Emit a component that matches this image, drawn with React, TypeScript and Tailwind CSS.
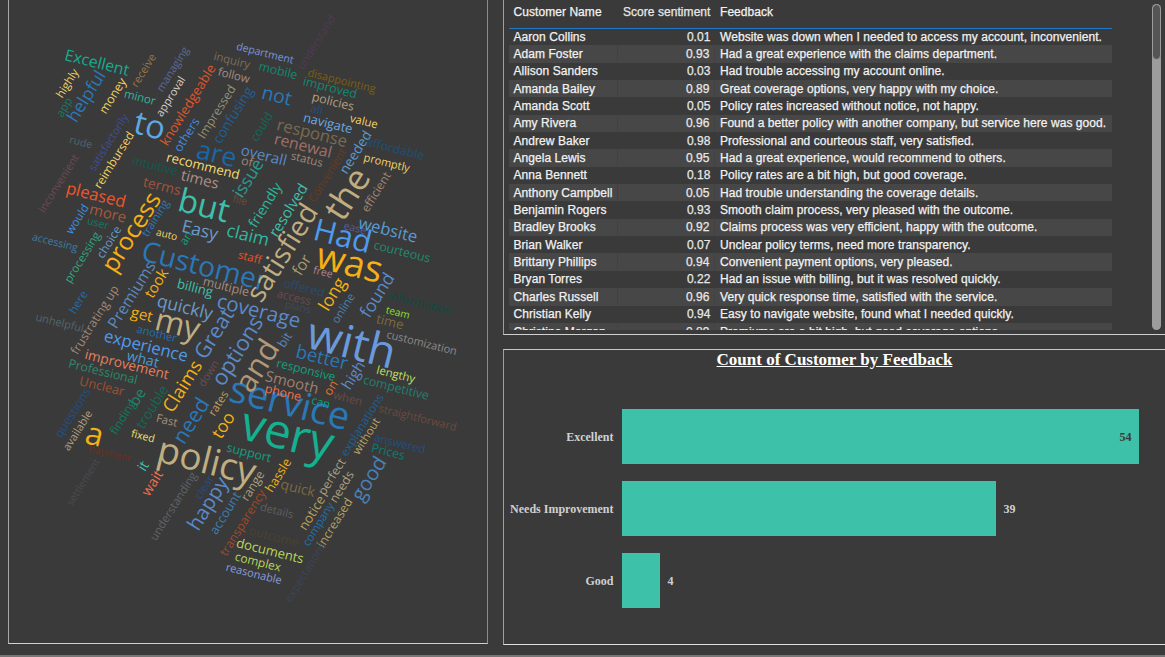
const A = 14;
const B = -58;

// word, center x, center y, font size, rotation, colour (page coordinates)
const words: [string, number, number, number, number, string][] = [
  ["Excellent", 97, 63, 18, A, "#14ae8e"],
  ["highly", 67, 83, 13, B, "#f2d466"],
  ["app", 64, 107, 13, B, "#0f7a60"],
  ["helpful", 86, 96, 20, B, "#2a78b8"],
  ["money", 113, 96, 14, B, "#f2d466"],
  ["receive", 143, 70, 12.5, B, "#9a7548"],
  ["minor", 140, 97, 13, A, "#2fb89e"],
  ["managing", 172, 69, 12.5, B, "#5b6a9a"],
  ["approval", 170, 96, 12.5, B, "#d5d0c5"],
  ["knowledgeable", 188, 105, 15, B, "#e0562b"],
  ["others", 187, 135, 14, B, "#3f8fdf"],
  ["Impressed", 217, 112, 14, B, "#9a8e70"],
  ["confusing", 233, 115, 16, B, "#1f5f96"],
  ["inquiry", 232, 60, 13, A, "#7a6e55"],
  ["follow", 234, 75, 13, A, "#a58e80"],
  ["department", 265, 53, 12, A, "#7a96de"],
  ["to", 150, 125, 37, A, "#5fa8e0"],
  ["rude", 81, 142, 12, A, "#4f6670"],
  ["satisfactorily", 108, 142, 12.5, B, "#3f4f95"],
  ["reimbursed", 114, 160, 13.5, B, "#f2d466"],
  ["inconvenient", 58, 183, 12.5, B, "#6e4a52"],
  ["intuitive", 155, 166, 14, A, "#0f5a4e"],
  ["recommend", 203, 166, 15, A, "#f5dc70"],
  ["are", 217, 153, 30, A, "#1a67a8"],
  ["times", 200, 179, 17, A, "#b09088"],
  ["terms", 162, 186, 16, A, "#a0543a"],
  ["pleased", 96, 195, 19, A, "#f0562a"],
  ["but", 204, 205, 37, A, "#3fc0aa"],
  ["more", 108, 213, 17, A, "#a85a38"],
  ["file", 240, 200, 12, A, "#6a4a3e"],
  ["process", 131, 232, 28, B, "#f5b014"],
  ["training", 155, 218, 13, B, "#2a78b8"],
  ["would", 77, 219, 13, B, "#3f8fdf"],
  ["user", 98, 223, 12, A, "#0f7a60"],
  ["accessing", 55, 242, 12, A, "#3f7aa0"],
  ["processing", 82, 257, 13, B, "#2fa880"],
  ["choice", 109, 242, 13.5, B, "#6a9ac8"],
  ["Customer", 205, 265, 32, A, "#2a78b8"],
  ["Easy", 200, 230, 20, A, "#6a9ac8"],
  ["claim", 248, 235, 20, A, "#2fb89e"],
  ["auto", 167, 234, 11.5, A, "#f2d466"],
  ["an", 186, 238, 13.5, B, "#10a080"],
  ["staff", 250, 257, 13, A, "#e0562b"],
  ["Premiums", 132, 295, 18, B, "#5a8ac0"],
  ["took", 156, 283, 17, B, "#f5b014"],
  ["billing", 195, 288, 15, A, "#3fc0aa"],
  ["multiple", 226, 287, 14, A, "#a08e80"],
  ["quickly", 185, 307, 20, A, "#6a9ac8"],
  ["coverage", 259, 310, 23, A, "#5a8ac8"],
  ["here", 78, 302, 13, B, "#1f6fb0"],
  ["frustrating up", 95, 320, 14, B, "#a08878"],
  ["get", 142, 314, 17, A, "#f5b014"],
  ["my", 178, 323, 36, A, "#c0ae80"],
  ["unhelpful", 60, 322, 12.5, A, "#4f6670"],
  ["another", 157, 333, 12.5, A, "#1f6fb0"],
  ["Great", 213, 333, 24, B, "#5a8ac8"],
  ["options", 236, 350, 25, B, "#5a8ac8"],
  ["experience", 146, 346, 19, A, "#4f9aef"],
  ["what", 143, 359, 16, A, "#4f9acf"],
  ["improvement", 127, 364, 15.5, A, "#e8805c"],
  ["Professional", 103, 372, 14, A, "#2a8a6a"],
  ["Unclear", 102, 386, 14.5, A, "#a05030"],
  ["down", 208, 373, 12.5, B, "#6e4a52"],
  ["Claims", 182, 386, 21, B, "#f5b014"],
  ["rates", 218, 403, 13, B, "#c0a060"],
  ["be", 137, 397, 17, B, "#1f8a70"],
  ["finding", 123, 417, 13.5, B, "#0f7a60"],
  ["trouble", 152, 407, 16, B, "#0f6a55"],
  ["questions", 73, 413, 14, B, "#1f4f85"],
  ["available", 77, 430, 12.5, B, "#b0a080"],
  ["a", 95, 433, 36, A, "#f5b014"],
  ["Fast", 167, 420, 13, A, "#a89078"],
  ["fixed", 143, 436, 12, A, "#f2e070"],
  ["need", 190, 420, 24, B, "#2a78b8"],
  ["too", 223, 425, 20, B, "#f5b014"],
  ["service", 290, 402, 43, A, "#2a78b8"],
  ["very", 288, 432, 54, A, "#14b090"],
  ["and", 256, 365, 35, B, "#b09878"],
  ["policy", 207, 460, 42, A, "#c0ae80"],
  ["support", 249, 453, 14, A, "#10a080"],
  ["it", 143, 466, 16, B, "#3fc0aa"],
  ["wait", 152, 483, 16, B, "#f07050"],
  ["payment", 110, 453, 12, A, "#6a3020"],
  ["settlement", 83, 482, 12, B, "#4a4a50"],
  ["understanding", 173, 506, 13, B, "#606468"],
  ["clear", 204, 487, 13, B, "#2a4a80"],
  ["happy", 207, 503, 23, B, "#5a8ac8"],
  ["account", 225, 513, 14.5, B, "#3a80b0"],
  ["range", 253, 486, 14, B, "#b0a080"],
  ["hassle", 278, 475, 14.5, B, "#f5b014"],
  ["quick", 298, 488, 16, A, "#7a6a40"],
  ["transparency", 243, 523, 14, B, "#a04a28"],
  ["details", 277, 510, 12.5, A, "#5c5e62"],
  ["outcome", 274, 537, 14, A, "#4a4230"],
  ["documents", 270, 551, 15, A, "#b8d858"],
  ["complex", 258, 562, 13.5, A, "#b8d858"],
  ["reasonable", 254, 573, 12.5, A, "#8a9cd8"],
  ["notice", 312, 513, 15, B, "#b8a060"],
  ["perfect", 332, 477, 14, B, "#b0a080"],
  ["needs", 342, 487, 14, B, "#b0a080"],
  ["company", 318, 524, 13, B, "#1f6fb0"],
  ["increased", 335, 523, 14, B, "#b8a060"],
  ["good", 368, 478, 23, B, "#4a80b8"],
  ["Prices", 388, 452, 14, A, "#0f7a70"],
  ["without", 366, 436, 13, B, "#b8a060"],
  ["explanations", 362, 425, 13.5, B, "#1f5f96"],
  ["answered", 400, 443, 13, A, "#1f4f85"],
  ["expectations", 305, 572, 13, B, "#3a4458"],
  ["straightforward", 418, 417, 12.5, A, "#6a4a40"],
  ["when", 348, 398, 13, A, "#6a4a48"],
  ["can", 321, 402, 13, A, "#10a080"],
  ["competitive", 396, 388, 14, A, "#1f8070"],
  ["lengthy", 396, 374, 13, A, "#c0e060"],
  ["customization", 422, 342, 12.5, A, "#8a8a8a"],
  ["time", 390, 322, 15, A, "#7a6a40"],
  ["team", 398, 312, 11.5, A, "#90e020"],
  ["information", 420, 303, 13.5, A, "#0f4a40"],
  ["found", 377, 295, 20, B, "#5a8ac8"],
  ["online", 343, 308, 13, B, "#4a80b0"],
  ["long", 332, 294, 20, B, "#f5b014"],
  ["free", 323, 272, 12, A, "#b08090"],
  ["offered", 304, 288, 14, A, "#2a4a70"],
  ["access", 294, 297, 13, A, "#6a4a50"],
  ["plans", 298, 307, 12, A, "#3f4a58"],
  ["bit", 285, 340, 14, B, "#5a8ac8"],
  ["better", 322, 357, 21, A, "#2a78b8"],
  ["high", 353, 375, 17, B, "#5a8ac8"],
  ["responsive", 306, 370, 13.5, A, "#10a080"],
  ["Smooth", 292, 382, 17, A, "#a08070"],
  ["on", 331, 388, 14, B, "#f07030"],
  ["phone", 283, 393, 14, A, "#f07050"],
  ["with", 352, 342, 51, A, "#6a9ade"],
  ["was", 350, 262, 42, A, "#f5b014"],
  ["Had", 343, 235, 35, A, "#4f9aef"],
  ["website", 388, 230, 19, A, "#5a9ad0"],
  ["ease", 355, 228, 12, A, "#5a5a90"],
  ["courteous", 402, 252, 14, A, "#1f8a70"],
  ["satisfied", 281, 252, 32, B, "#c0ae80"],
  ["for", 302, 265, 18, B, "#a89a70"],
  ["the", 346, 193, 40, B, "#c0ae80"],
  ["resolved", 288, 210, 17, B, "#3fc0aa"],
  ["friendly", 265, 205, 16, B, "#2fb89e"],
  ["issue", 248, 178, 20, B, "#2a9a90"],
  ["overall", 264, 155, 17, A, "#5a8ac8"],
  ["of", 247, 162, 14, A, "#a08878"],
  ["could", 262, 127, 14, B, "#0f6a55"],
  ["not", 277, 95, 22, A, "#2a78b8"],
  ["mobile", 278, 71, 14, A, "#0f8a70"],
  ["understand", 316, 42, 13, B, "#4f3a50"],
  ["disappointing", 342, 80, 12.5, A, "#7a5f10"],
  ["improved", 330, 88, 14, A, "#0f8a70"],
  ["policies", 333, 102, 14, A, "#b0a080"],
  ["all", 317, 109, 13, A, "#1f4f85"],
  ["navigate", 328, 123, 14.5, A, "#6aa8e0"],
  ["value", 364, 121, 13, A, "#f2d466"],
  ["response", 312, 133, 19, A, "#7a6a50"],
  ["renewal", 303, 146, 18, A, "#a07068"],
  ["status", 307, 159, 13, A, "#a08878"],
  ["needed", 355, 152, 15.5, B, "#5a9ad0"],
  ["affordable", 395, 149, 14, A, "#1f4f75"],
  ["promptly", 387, 162, 12.5, A, "#f2d466"],
  ["Convenient", 327, 175, 13, B, "#6a3a20"],
  ["efficient", 376, 192, 13.5, B, "#a08878"],
];

const rows: [string, string, string][] = [
  ["Aaron Collins", "0.01", "Website was down when I needed to access my account, inconvenient."],
  ["Adam Foster", "0.93", "Had a great experience with the claims department."],
  ["Allison Sanders", "0.03", "Had trouble accessing my account online."],
  ["Amanda Bailey", "0.89", "Great coverage options, very happy with my choice."],
  ["Amanda Scott", "0.05", "Policy rates increased without notice, not happy."],
  ["Amy Rivera", "0.96", "Found a better policy with another company, but service here was good."],
  ["Andrew Baker", "0.98", "Professional and courteous staff, very satisfied."],
  ["Angela Lewis", "0.95", "Had a great experience, would recommend to others."],
  ["Anna Bennett", "0.18", "Policy rates are a bit high, but good coverage."],
  ["Anthony Campbell", "0.05", "Had trouble understanding the coverage details."],
  ["Benjamin Rogers", "0.93", "Smooth claim process, very pleased with the outcome."],
  ["Bradley Brooks", "0.92", "Claims process was very efficient, happy with the outcome."],
  ["Brian Walker", "0.07", "Unclear policy terms, need more transparency."],
  ["Brittany Phillips", "0.94", "Convenient payment options, very pleased."],
  ["Bryan Torres", "0.22", "Had an issue with billing, but it was resolved quickly."],
  ["Charles Russell", "0.96", "Very quick response time, satisfied with the service."],
  ["Christian Kelly", "0.94", "Easy to navigate website, found what I needed quickly."],
  ["Christine Morgan", "0.89", "Premiums are a bit high, but good coverage options."],
];

function WordCloud() {
  return (
    <div className="relative w-[480px] h-[644px] shrink-0 overflow-hidden border-l-[1.5px] border-r-[1.5px] border-b-[1.5px] border-l-[#a8a8a8] border-r-[#8c8c8c] border-b-[#d0d0d0] font-['Open_Sans',sans-serif]">
      {words.map(([w, x, y, size, rot, color]) => (
        <span
          key={w}
          className="absolute -translate-x-1/2 -translate-y-1/2 whitespace-nowrap leading-none"
          style={{ left: x - 9.5, top: y, fontSize: size * 0.88, rotate: `${rot}deg`, color }}
        >
          {w}
        </span>
      ))}
    </div>
  );
}

function CustomerTable() {
  return (
    <div className="flex h-[335px] shrink-0 border-l-[1.5px] border-b-[1.5px] border-l-[#a0a0a0] border-b-[#d0d0d0]">
      <div className="ml-[4.5px] w-[603px] h-[330px] overflow-hidden text-[12px] tracking-[0.06px] [-webkit-text-stroke:0.25px] text-[#f2f2f2] font-['Liberation_Sans',sans-serif]">
        <div className="flex h-[28px] items-center pb-[5px]">
          <div className="w-[109px] pl-[5px]">Customer Name</div>
          <div className="w-[97px] text-right pr-[4px] text-[#e8e8e8]">Score sentiment</div>
          <div className="pl-[5.5px]">Feedback</div>
        </div>
        <div className="h-[1px] bg-[#1f78c8]" />
        <div className="-mt-[1px]">
          {rows.map(([name, score, text], i) => (
            <div key={name} className={`flex h-[17.35px] items-center whitespace-nowrap ${i % 2 === 1 ? "bg-[#474747]" : ""}`}>
              <div className={`w-[109px] pl-[5px] ${i % 2 === 1 ? "border-r border-[#424242]" : ""}`}>{name}</div>
              <div className={`w-[97px] text-right pr-[4px] text-[#e8e8e8] ${i % 2 === 1 ? "border-r border-[#424242]" : ""}`}>{score}</div>
              <div className="pl-[5.5px]">{text}</div>
            </div>
          ))}
        </div>
      </div>
      <div className="relative ml-[40px] mt-[4px] w-[9px] h-[326px] rounded-full bg-[#9c9c9c] overflow-hidden">
        <div className="h-[56px] rounded-full border-[1.5px] border-[#9c9c9c] bg-[#555555]" />
      </div>
    </div>
  );
}

function FeedbackChart() {
  return (
    <div className="mt-[14px] h-[296px] shrink-0 border-l-[1.5px] border-t-[1.5px] border-b-[1.5px] border-l-[#a0a0a0] border-t-[#c8c8c8] border-b-[#e0e0e0] font-['Liberation_Serif',serif]">
      <div className="text-center text-[17px] leading-[20px] font-bold text-white underline">Count of Customer by Feedback</div>
      <div className="mt-[39px] flex flex-col gap-[17.5px] text-[12px] font-bold text-[#d0d0d0]">
        <div className="flex h-[54.5px] items-center">
          <div className="w-[109.5px] pt-[1px] text-right whitespace-nowrap">Excellent</div>
          <div className="ml-[8px] flex h-full w-[517px] items-center justify-end pt-[1px] pr-[7px] bg-[#3dc1a8] text-[#3a3a3a]">54</div>
        </div>
        <div className="flex h-[54.5px] items-center">
          <div className="w-[109.5px] pt-[1px] text-right whitespace-nowrap">Needs Improvement</div>
          <div className="ml-[8px] h-full w-[374px] bg-[#3dc1a8]" />
          <div className="ml-[8px] pt-[1px]">39</div>
        </div>
        <div className="flex h-[54.5px] items-center">
          <div className="w-[109.5px] pt-[1px] text-right whitespace-nowrap">Good</div>
          <div className="ml-[8px] h-full w-[38px] bg-[#3dc1a8]" />
          <div className="ml-[8px] pt-[1px]">4</div>
        </div>
      </div>
    </div>
  );
}

export default function App() {
  return (
    <div className="relative w-[1165px] h-[657px] overflow-hidden bg-[#3a3a3a]">
      <div className="flex h-[655px] pl-[8px]">
        <WordCloud />
        <div className="ml-[15px] flex-1 flex flex-col">
          <CustomerTable />
          <FeedbackChart />
        </div>
      </div>
      <div className="h-[2px] bg-[#777777]" />
    </div>
  );
}
